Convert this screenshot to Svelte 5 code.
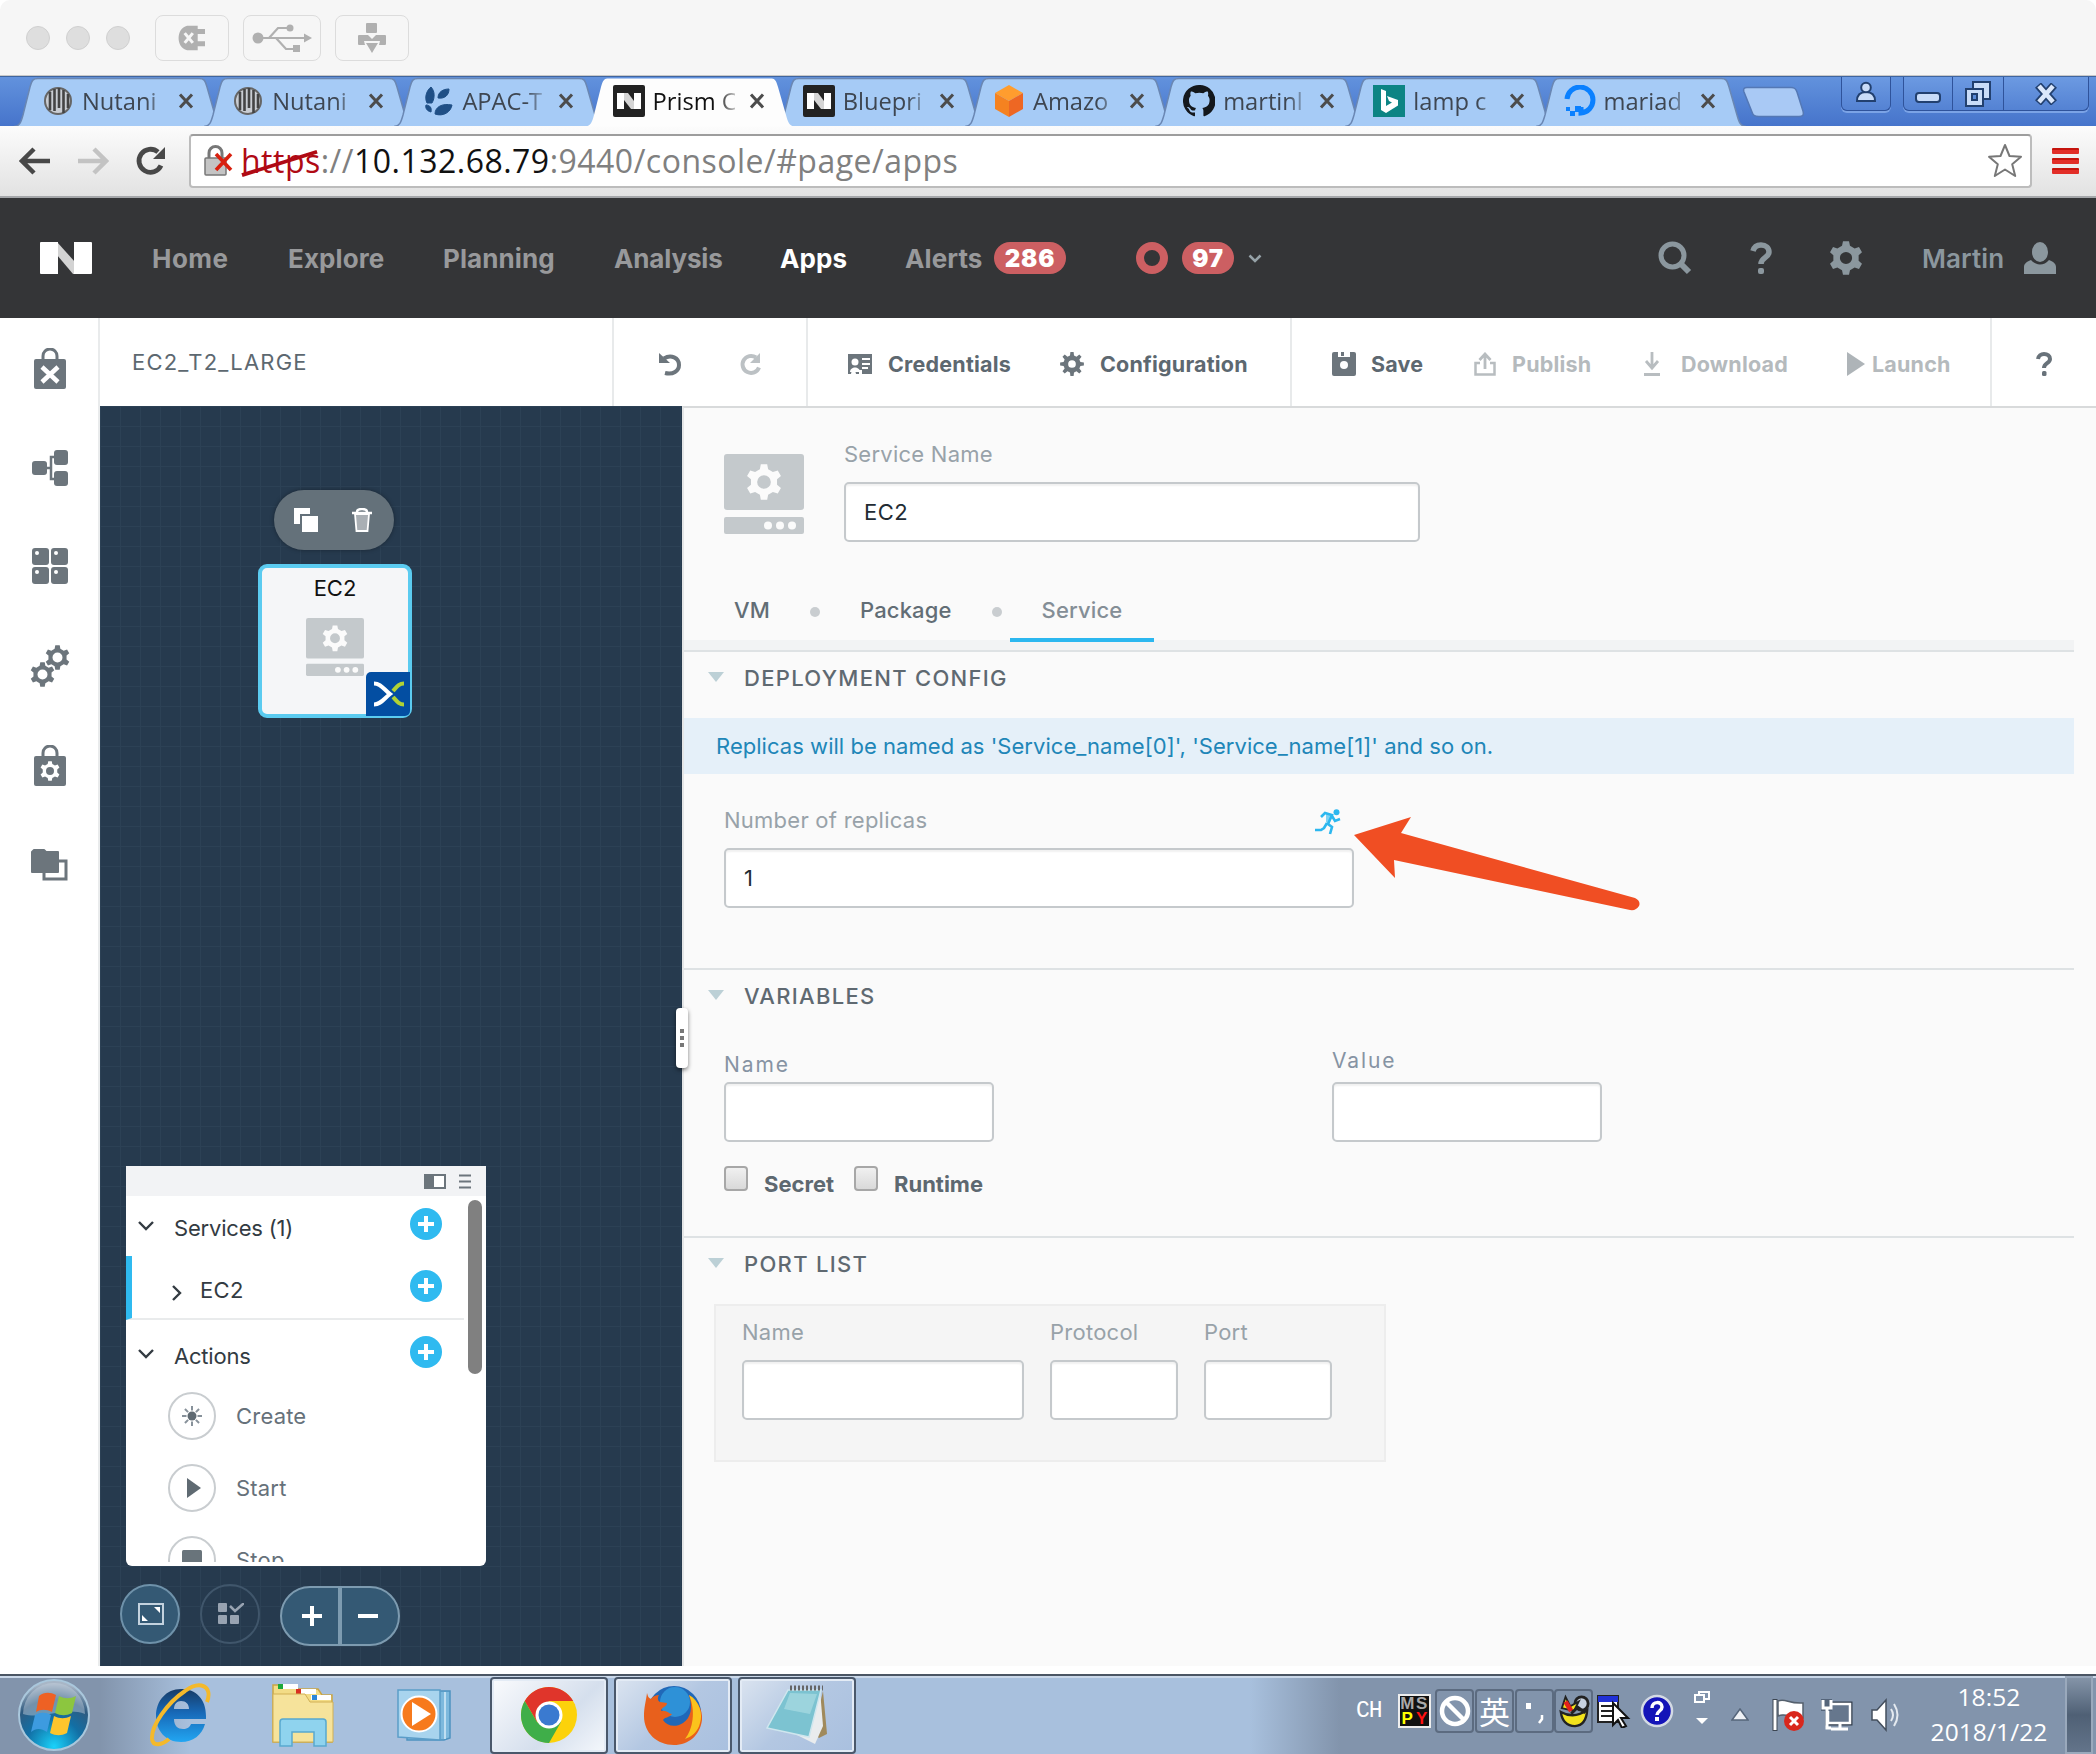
<script>
  // Outline of a cog wheel with a round hole, for use with fill-rule evenodd.
  function gear(cx, cy, r, teeth = 6, hole = 0.36, root = 0.74) {
    const pts = [];
    const step = (Math.PI * 2) / teeth;
    for (let i = 0; i < teeth; i++) {
      const a = i * step - Math.PI / 2;
      for (const [o, k] of [[-0.3, root], [-0.17, 1], [0.17, 1], [0.3, root]]) {
        const t = a + o * step;
        pts.push(`${(cx + Math.cos(t) * r * k).toFixed(2)} ${(cy + Math.sin(t) * r * k).toFixed(2)}`);
      }
    }
    const h = r * hole;
    return `M${pts.join('L')}Z M${cx - h} ${cy}a${h} ${h} 0 1 0 ${h * 2} 0a${h} ${h} 0 1 0 ${-h * 2} 0Z`;
  }

  const tabs = [
    { icon: 'globe', title: 'Nutani' },
    { icon: 'globe', title: 'Nutani' },
    { icon: 'leaf', title: 'APAC-T' },
    { icon: 'n', title: 'Prism C', active: true },
    { icon: 'n', title: 'Bluepri' },
    { icon: 'cube', title: 'Amazo' },
    { icon: 'github', title: 'martinl' },
    { icon: 'bing', title: 'lamp c' },
    { icon: 'ocean', title: 'mariad' }
  ];

  const rays = [0, 45, 90, 135, 180, 225, 270, 315];
</script>

{#snippet favicon(name)}
  <svg class="fav" viewBox="0 0 32 32">
    {#if name === 'globe'}
      <circle cx="16" cy="16" r="13" fill="#c9cdd3" stroke="#666" stroke-width="2" />
      <path d="M8 7v18M12.500 4v22M17 3v20M21.500 5v23M26 9v14" stroke="#444" stroke-width="2.600" fill="none" />
    {:else if name === 'leaf'}
      <path d="M5 18C2 12 5 5 9 2c4 4 4 11 1 16zM16 13c0-6 5-9 11-9 0 6-4 10-11 9zM13 29c0-7 7-11 17-9-1 7-9 12-17 9zM9 27c-4-1-6-4-5-7 4 0 6 3 5 7z" fill="#1f4f86" stroke="#1f4f86" />
    {:else if name === 'n'}
      <rect width="32" height="32" rx="2" fill="#222" />
      <path d="M4 8h7v16H4zM21 8h7v16h-7z" fill="#fff" />
      <path d="M11 8h4l6 8v8h-3l-7-9z" fill="#d5d5d5" />
    {:else if name === 'cube'}
      <path d="M16 0l14 8-14 8L2 8z" fill="#ff9d2e" />
      <path d="M2 8l14 8v16L2 24z" fill="#f58220" />
      <path d="M30 8l-14 8v16l14-8z" fill="#ee6723" />
    {:else if name === 'github'}
      <path d="M16 0a16 16 0 0 0-5 31.200c.8.200 1-.3 1-.8v-3c-4.500 1-5.400-1.900-5.400-1.900-.7-1.900-1.800-2.400-1.800-2.400-1.500-1 .1-1 .1-1 1.600.1 2.500 1.700 2.500 1.700 1.400 2.500 3.800 1.800 4.700 1.400.1-1 .6-1.800 1-2.200C9.500 22.600 6 21.200 6 15.100c0-1.800.6-3.200 1.700-4.300-.2-.4-.7-2.100.2-4.300 0 0 1.400-.4 4.400 1.700a15 15 0 0 1 8 0c3-2.100 4.400-1.700 4.400-1.700.9 2.200.4 3.900.2 4.300 1.100 1.100 1.700 2.500 1.700 4.300 0 6.100-3.700 7.500-7.300 7.900.6.500 1.100 1.500 1.100 3v4.400c0 .5.300 1 1.100.8A16 16 0 0 0 16 0z" fill="#14181d" />
    {:else if name === 'bing'}
      <rect width="32" height="32" fill="#0c8484" />
      <path d="M8 4l5 2v15l6-3.500-3-1.500-2-5 11 4v5.500L13 28l-5-3z" fill="#fff" />
    {:else}
      <path d="M3 14A13 13 0 1 1 17 28v-6" fill="none" stroke="#0a80ff" stroke-width="5" />
      <path d="M11 21h6v6h-6zM6 26h5v5H6zM2 22h4v4H2z" fill="#0a80ff" />
    {/if}
  </svg>
{/snippet}

{#snippet server(cls)}
  <svg class={cls} viewBox="0 0 80 80" preserveAspectRatio="none">
    <rect width="80" height="56" rx="3" fill="#c4c9cc" />
    <path d={gear(40, 28, 18, 6, 0.38)} fill="#fbfbfb" fill-rule="evenodd" />
    <rect y="63" width="80" height="17" rx="2" fill="#c4c9cc" />
    <circle cx="44" cy="71.500" r="4" fill="#fbfbfb" />
    <circle cx="56" cy="71.500" r="4" fill="#fbfbfb" />
    <circle cx="68" cy="71.500" r="4" fill="#fbfbfb" />
  </svg>
{/snippet}

{#snippet plus()}
  <svg class="plus" viewBox="0 0 32 32">
    <circle cx="16" cy="16" r="16" fill="#2fbaf0" />
    <path d="M16 8v16M8 16h16" stroke="#fff" stroke-width="4" />
  </svg>
{/snippet}

<div class="window">
  <div class="titlebar">
    <i class="light"></i><i class="light"></i><i class="light"></i>
    <div class="vmbtn b1">
      <svg width="34" height="32" viewBox="0 0 34 32">
        <path d="M11 1h13v30H11C-3 28-3 4 11 1zM22 5h11v6H22zM22 20h11v6H22z" fill="#b0b0b0" />
        <path d="M8 10l10 12M18 10L8 22" stroke="#f6f6f6" stroke-width="3.800" />
      </svg>
    </div>
    <div class="vmbtn b2">
      <svg width="60" height="30" viewBox="0 0 60 30">
        <circle cx="6" cy="15" r="5.500" fill="#b0b0b0" />
        <path d="M6 15h48M17 15l9-10h10M24 15l10 11h8" stroke="#b0b0b0" stroke-width="2.200" fill="none" />
        <path d="M52 10.500l8 4.500-8 4.500zM41 22h7v7h-7z" fill="#b0b0b0" />
        <circle cx="38" cy="5" r="3.500" fill="#b0b0b0" />
      </svg>
    </div>
    <div class="vmbtn b3">
      <svg width="30" height="30" viewBox="0 0 30 30">
        <path d="M10 0h9a1 1 0 0 1 1 1v8a1 1 0 0 1-1 1h-9a1 1 0 0 1-1-1V1a1 1 0 0 1 1-1zM2 12h9l4 4 4-4h9a1 1 0 0 1 1 1v8a1 1 0 0 1-1 1h-6l1-4H7l1 4H2a1 1 0 0 1-1-1v-8a1 1 0 0 1 1-1zM9 20h12l-6 10z" fill="#b0b0b0" />
      </svg>
    </div>
  </div>

  <div class="tabstrip">
    <div class="tabs">
      {#each tabs as t}
        <div class="tab" class:active={t.active}>
          <svg class="tabshape" viewBox="0 0 212 50" width="212" height="50">
            <path d="M1 49.500C7 49 8 45 10 38L17 10C19 3 20 1.500 25 1.500H186C191 1.500 192 3 194 10L202 38C204 45 205 49 211 49.500" fill={t.active ? '#fdfdfd' : '#a6cbf6'} stroke={t.active ? 'none' : '#6a87b3'} stroke-width="1.500" />
          </svg>
          <div class="tabbody">
            {@render favicon(t.icon)}
            <span class="tabtitle">{t.title}</span>
            <svg class="close" viewBox="0 0 16 16"><path d="M2 1.500l12 13M14 1.500L2 14.500" stroke="#4c4c4c" stroke-width="3" /></svg>
          </div>
        </div>
      {/each}
    </div>
    <svg class="newtab" width="64" height="32" viewBox="0 0 64 32"><path d="M5 1.500H49C53 1.500 54 3 55 6L61 25C62 29 61 30.500 57 30.500H17C12 30.500 11 29 10 26L2 6C1 3 2 1.500 5 1.500Z" fill="#a9c9f5" stroke="#5478b5" stroke-width="1.500" /></svg>
    <div class="wc user"><svg width="22" height="22" viewBox="0 0 22 22"><path d="M2 20c0-6 3-9 9-9s9 3 9 9z" fill="#c9dcf8" stroke="#22406f" stroke-width="2" /><circle cx="11" cy="6.500" r="4.800" fill="#c9dcf8" stroke="#22406f" stroke-width="2" /></svg></div>
    <div class="wc min"><svg width="26" height="11" viewBox="0 0 26 11"><rect x="1" y="1" width="24" height="9" rx="3" fill="#c9dcf8" stroke="#22406f" stroke-width="2" /></svg></div>
    <div class="wc mid"><svg width="26" height="26" viewBox="0 0 26 26"><path d="M8 1h17v17H8z" fill="#c9dcf8" stroke="#22406f" stroke-width="2" /><path d="M1 8h17v17H1z" fill="#c9dcf8" stroke="#22406f" stroke-width="2" /><path d="M7 13h5v6H7z" fill="#5b8bd9" stroke="#22406f" stroke-width="2" /></svg></div>
    <div class="wc x"><svg width="24" height="22" viewBox="0 0 24 22"><path d="M4 2l16 18M20 2L4 20" stroke="#22406f" stroke-width="8" /><path d="M5 3l14 16M19 3L5 19" stroke="#dbe7fb" stroke-width="4.500" /></svg></div>
  </div>

  <div class="toolbar">
    <svg width="32" height="28" viewBox="0 0 32 28"><path d="M31 14H4M15 2L3 14l12 12" stroke="#484848" stroke-width="4.500" fill="none" /></svg>
    <svg width="32" height="28" viewBox="0 0 32 28"><path d="M1 14h27M17 2l12 12-12 12" stroke="#c3c3c3" stroke-width="4.500" fill="none" /></svg>
    <svg width="32" height="30" viewBox="0 0 32 30"><path d="M26 19.500A11.500 11.500 0 1 1 23 6" stroke="#484848" stroke-width="4.800" fill="none" /><path d="M30 1v12H18z" fill="#484848" /></svg>
    <div class="omnibox">
      <svg class="lock" width="30" height="32" viewBox="0 0 30 32">
        <path d="M5 14V8a6.500 6.500 0 0 1 13 0v6" fill="none" stroke="#777" stroke-width="3" />
        <rect x="1" y="13" width="21" height="17" rx="1" fill="#c4c4c4" stroke="#777" stroke-width="1.500" />
        <path d="M12 9l15 16M27 9L12 25" stroke="#d8200f" stroke-width="3.600" />
      </svg>
      <span class="url"><span class="https">https<svg class="strike" viewBox="0 0 80 30" preserveAspectRatio="none"><path d="M1 28L78 3" stroke="#b00a14" stroke-width="4" /></svg></span><span class="dim">://</span>10.132.68.79<span class="dim">:9440/console/#page/apps</span></span>
      <svg class="star" width="36" height="36" viewBox="0 0 36 36"><path d="M18 2l4.500 11 11.500.8-8.800 7.500 3 11.700L18 26.500 7.800 33l3-11.700L2 13.800 13.500 13z" fill="#fff" stroke="#777" stroke-width="2" stroke-linejoin="round" /></svg>
    </div>
    <div class="burger"><i></i><i></i><i></i></div>
  </div>

  <div class="nav">
    <svg width="52" height="32" viewBox="0 0 52 32"><path d="M17 0l18 20v12h-2L17 13z" fill="#d3d3d3" /><path d="M1 0h17v32H1a1 1 0 0 1-1-1V1a1 1 0 0 1 1-1zM34 0h17a1 1 0 0 1 1 1v30a1 1 0 0 1-1 1H34z" fill="#fff" /></svg>
    <span class="wide">Home</span><span>Explore</span><span>Planning</span><span class="tight">Analysis</span><span class="on">Apps</span><span>Alerts</span>
    <b class="badge w72">286</b>
    <i class="ring"></i>
    <b class="badge w52">97</b>
    <svg width="14" height="9" viewBox="0 0 14 9"><path d="M1.500 1.500L7 7l5.500-5.500" stroke="#96a2a8" stroke-width="2.500" fill="none" /></svg>
    <svg width="34" height="34" viewBox="0 0 34 34"><circle cx="14.500" cy="14.500" r="11.500" stroke="#8b979e" stroke-width="5" fill="none" /><path d="M22 22l9 9" stroke="#8b979e" stroke-width="6" /></svg>
    <svg width="22" height="32" viewBox="0 0 22 32"><path d="M3 9c1-4 4-6 8-6 5 0 8 3 8 7 0 6-8 5-8 12" stroke="#8b979e" stroke-width="5.500" fill="none" /><rect x="8" y="26" width="6" height="6" rx="2" fill="#8b979e" /></svg>
    <svg width="34" height="34" viewBox="0 0 34 34"><path d={gear(17, 17, 17, 6, 0.36, 0.76)} fill="#8b979e" fill-rule="evenodd" /></svg>
    <span class="user-name">Martin</span>
    <svg width="32" height="32" viewBox="0 0 32 32"><ellipse cx="16" cy="10" rx="8" ry="10" fill="#8b979e" /><path d="M0 32v-7c0-3 2-5 7-7 5 6 13 6 18 0 5 2 7 4 7 7v7z" fill="#8b979e" /></svg>
  </div>

  <div class="main">
    <div class="rail">
      <svg width="34" height="42" viewBox="0 0 34 42"><path d="M10 12V8a7 7 0 0 1 14 0v4" stroke="#6c757c" stroke-width="3" fill="none" /><rect x="1" y="11" width="32" height="30" rx="2" fill="#6c757c" /><path d="M9 19l16 15M25 19L9 34" stroke="#fff" stroke-width="4.500" /></svg>
      <svg width="38" height="38" viewBox="0 0 38 38"><path d="M13 19h7M28 8h-8v22h8" stroke="#6c757c" stroke-width="2.500" fill="none" /><rect x="1" y="12" width="15" height="14" rx="3" fill="#6c757c" /><rect x="23" y="1" width="14" height="15" rx="3" fill="#6c757c" /><rect x="23" y="22" width="14" height="15" rx="3" fill="#6c757c" /></svg>
      <svg width="38" height="38" viewBox="0 0 38 38"><g fill="#6c757c"><rect x="1" y="1" width="17" height="17" rx="3" /><rect x="20" y="1" width="17" height="17" rx="3" /><rect x="1" y="20" width="17" height="17" rx="3" /><rect x="20" y="20" width="17" height="17" rx="3" /></g><g fill="#fff"><circle cx="6" cy="6" r="2" /><circle cx="25" cy="6" r="2" /><circle cx="6" cy="25" r="2" /><circle cx="25" cy="25" r="2" /></g></svg>
      <svg width="40" height="42" viewBox="0 0 40 42"><path d={gear(27.500, 12.500, 12.500, 6, 0.4)} fill="#6c757c" fill-rule="evenodd" /><path d={gear(12.500, 29.500, 12.500, 6, 0.4)} fill="#6c757c" fill-rule="evenodd" /></svg>
      <svg width="34" height="42" viewBox="0 0 34 42"><path d="M10 12V8a7 7 0 0 1 14 0v4" stroke="#6c757c" stroke-width="3" fill="none" /><rect x="1" y="11" width="32" height="30" rx="2" fill="#6c757c" /><path d={gear(17, 26, 10, 6, 0.4)} fill="#fff" fill-rule="evenodd" /></svg>
      <svg width="38" height="34" viewBox="0 0 38 34"><path d="M13 20v10h22V12H25" stroke="#6c757c" stroke-width="3" fill="none" /><path d="M3 1h10l2 2h12v20H1V3z" fill="#6c757c" stroke="#6c757c" stroke-width="2" stroke-linejoin="round" /></svg>
    </div>

    <div class="content">
      <div class="actions">
        <div class="seg name">EC2_T2_LARGE</div>
        <div class="seg history">
          <svg width="24" height="24" viewBox="0 0 24 24"><path d="M6 6.500C13 2 21 6 21 13c0 6-6 10-14 8" stroke="#6c757c" stroke-width="4" fill="none" /><path d="M1 1v10h11z" fill="#6c757c" /></svg>
          <svg width="24" height="24" viewBox="0 0 24 24"><path d="M21 15.500A8.500 8.500 0 1 1 18 5.500" stroke="#bcc1c4" stroke-width="4" fill="none" /><path d="M22 1v10H12z" fill="#bcc1c4" /></svg>
        </div>
        <div class="seg config">
          <svg width="24" height="20" viewBox="0 0 24 20"><path d="M0 0h24v20H14v-4H11v4H8c0-4-5-4-5 0H0z" fill="#6c757c" /><path d="M14 5h8M14 10h8M14 14h6" stroke="#fff" stroke-width="2.200" /><circle cx="7" cy="8" r="3.500" fill="#fff" /><path d="M2 18c0-6 10-6 10 0" fill="#fff" /></svg>
          <span>Credentials</span>
          <svg width="24" height="24" viewBox="0 0 24 24"><path d={gear(12, 12, 12, 8, 0.32, 0.72)} fill="#6c757c" fill-rule="evenodd" /></svg>
          <span>Configuration</span>
        </div>
        <div class="seg files">
          <svg width="24" height="24" viewBox="0 0 24 24"><rect width="24" height="24" rx="2" fill="#6c757c" /><path d="M6 0h12v5H6z" fill="#fff" /><path d="M9 0h3v4H9z" fill="#6c757c" /><circle cx="12" cy="13" r="4" fill="#fff" /></svg>
          <span>Save</span>
          <svg width="22" height="24" viewBox="0 0 22 24"><path d="M6 11H1.500v11.500h19V11H16" stroke="#b8bdc0" stroke-width="2.500" fill="none" /><path d="M11 17V3M5.500 8L11 2l5.500 6" stroke="#b8bdc0" stroke-width="2.800" fill="none" /></svg>
          <span class="off">Publish</span>
          <svg width="18" height="24" viewBox="0 0 18 24"><path d="M9 0v15M3 9l6 7 6-7" stroke="#b8bdc0" stroke-width="2.800" fill="none" /><path d="M1 21h16v3H1z" fill="#b8bdc0" /></svg>
          <span class="off">Download</span>
          <svg width="18" height="24" viewBox="0 0 18 24"><path d="M0 0l18 12L0 24z" fill="#aeb4b8" /></svg>
          <span class="off">Launch</span>
        </div>
        <div class="seg help"><svg width="16" height="24" viewBox="0 0 16 24"><path d="M2 7c.5-3 3-5 6-5 3.500 0 6 2 6 5 0 4.500-6 4-6 9" stroke="#68727a" stroke-width="4" fill="none" /><rect x="6" y="19" width="4.500" height="5" rx="1.500" fill="#68727a" /></svg></div>
      </div>

      <div class="work">
        <div class="canvas">
          <div class="pill">
            <svg width="24" height="24" viewBox="0 0 24 24"><path d="M0 0h16v6H6v10H0zM8 8h16v16H8z" fill="#fff" /></svg>
            <svg width="20" height="24" viewBox="0 0 20 24"><path d="M3 6l1.500 17h11L17 6z" fill="#a9afb4" stroke="#fff" stroke-width="1.800" /><path d="M0 5h20M5 4c0-4 10-4 10 0" stroke="#fff" stroke-width="2.400" fill="none" /></svg>
          </div>
          <div class="node">
            <span>EC2</span>
            {@render server('nodeicon')}
            <svg class="xi" width="44" height="44" viewBox="0 0 44 44"><path d="M5 0h39v39a5 5 0 0 1-5 5H0V5a5 5 0 0 1 5-5z" fill="#034ea2" /><path d="M38 11.500c-5 0-7 3-11 7.500M38 32.500c-5 0-7-3-11-7.500" fill="none" stroke="#b0d235" stroke-width="4" /><path d="M8 11.500c7 0 9 5 16 10.500-7 5.500-9 10.500-16 10.500" fill="none" stroke="#fff" stroke-width="4" /></svg>
          </div>

          <div class="tree">
            <div class="treehead">
              <svg width="22" height="15" viewBox="0 0 22 15"><rect x="1" y="1" width="20" height="13" fill="#fff" stroke="#6c757c" stroke-width="2" /><rect width="10" height="15" fill="#6c757c" /></svg>
              <svg width="14" height="15" viewBox="0 0 14 15"><path d="M1 1.500h12M1 7.500h12M1 13.500h12" stroke="#6c757c" stroke-width="2" /></svg>
            </div>
            <div class="treebody">
              <div class="rows">
                <div class="row head r1"><svg width="16" height="10" viewBox="0 0 16 10"><path d="M1 1l7 7 7-7" stroke="#333b42" stroke-width="2.400" fill="none" /></svg><span>Services (1)</span>{@render plus()}</div>
                <div class="row sel"><svg width="10" height="16" viewBox="0 0 10 16"><path d="M1 1l7 7-7 7" stroke="#333b42" stroke-width="2.400" fill="none" /></svg><span>EC2</span>{@render plus()}</div>
                <div class="row head r2"><svg width="16" height="10" viewBox="0 0 16 10"><path d="M1 1l7 7 7-7" stroke="#333b42" stroke-width="2.400" fill="none" /></svg><span>Actions</span>{@render plus()}</div>
                <div class="act"><i><svg width="20" height="20" viewBox="-10 -10 20 20"><circle r="4.500" fill="#5f6a72" />{#each rays as a}<path d="M0-5.500V-10" transform="rotate({a})" stroke="#87919a" stroke-width="2" />{/each}</svg></i><span>Create</span></div>
                <div class="act"><i><svg class="play" width="16" height="20" viewBox="0 0 16 20"><path d="M1 0l14 10L1 20z" fill="#5f6a72" /></svg></i><span>Start</span></div>
                <div class="act"><i><svg width="20" height="20" viewBox="0 0 20 20"><rect width="20" height="20" rx="1.500" fill="#69747b" /></svg></i><span>Stop</span></div>
              </div>
              <div class="thumb"></div>
            </div>
          </div>

          <div class="canvasbtns">
            <div class="round"><svg width="26" height="22" viewBox="0 0 26 22"><rect x="1" y="1" width="24" height="20" fill="none" stroke="#c3d2de" stroke-width="2" /><path d="M16 4h6v6zM4 12l6 6H4z" fill="#fff" /></svg></div>
            <div class="round dim2"><svg width="26" height="22" viewBox="0 0 26 22"><g fill="#98a3b1"><rect width="9" height="9" rx="1" /><rect y="12" width="9" height="9" rx="1" /><rect x="12" y="12" width="9" height="9" rx="1" /></g><path d="M12 3l5 5 9-8" stroke="#98a3b1" stroke-width="2.500" fill="none" /></svg></div>
            <div class="zoom"><div><svg width="20" height="20" viewBox="0 0 20 20"><path d="M10 0v20M0 10h20" stroke="#fff" stroke-width="4" /></svg></div><div><svg width="20" height="20" viewBox="0 0 20 20"><path d="M0 10h20" stroke="#fff" stroke-width="4" /></svg></div></div>
          </div>
          <div class="handle"><i></i><i></i><i></i></div>
        </div>

        <div class="pane">
          <div class="svc">
            {@render server('svcicon')}
            <div>
              <div class="label">Service Name</div>
              <div class="input i1">EC2</div>
            </div>
          </div>
          <div class="ptabs"><span>VM</span><i></i><span>Package</span><i></i><span class="cur">Service</span></div>
          <div class="band"></div>

          <section class="s1">
            <h3><i></i>DEPLOYMENT CONFIG</h3>
            <div class="banner">Replicas will be named as 'Service_name[0]', 'Service_name[1]' and so on.</div>
            <div class="replicas">
              <div class="repl"><span class="label">Number of replicas</span>
                <svg class="runner" width="28" height="26" viewBox="0 0 28 26"><circle cx="22.500" cy="3.200" r="3" fill="#2cb7ef" /><path d="M7 8l4-4 7 2-4 9 4 3-2 7M13 14l-3 5-3 2H1M18 7l3 5 5-2" stroke="#2cb7ef" stroke-width="2.600" fill="none" /><path d="M12 4l7 2-4 9-3-2z" fill="#2cb7ef" opacity=".6" /></svg>
              </div>
              <div class="input one">1</div>
            </div>
          </section>

          <section class="s2">
            <h3><i></i>VARIABLES</h3>
            <div class="vars">
              <div><div class="vlabel">Name</div><div class="input"></div></div>
              <div><div class="vlabel up">Value</div><div class="input"></div></div>
            </div>
            <div class="checks"><i></i><b>Secret</b><i></i><b>Runtime</b></div>
          </section>

          <section class="s3">
            <h3><i></i>PORT LIST</h3>
            <div class="ports">
              <div><div class="label">Name</div><div class="input"></div></div>
              <div><div class="label">Protocol</div><div class="input"></div></div>
              <div><div class="label">Port</div><div class="input"></div></div>
            </div>
          </section>
          <svg class="pointer" width="290" height="100" viewBox="0 0 290 100"><path d="M1 21L58 3 48 19 282 84Q288 87 286 92 283 97 277 96L41 46 42 64Z" fill="#f04e23" /></svg>
        </div>
      </div>
    </div>
  </div>

  <div class="taskbar">
    <svg class="orb" width="74" height="74" viewBox="0 0 74 74">
      <defs><radialGradient id="orb" cx=".5" cy=".95" r=".9"><stop offset="0" stop-color="#19d2fa" /><stop offset=".45" stop-color="#126fa5" /><stop offset=".75" stop-color="#2f5b80" /><stop offset="1" stop-color="#a8b6c6" /></radialGradient></defs>
      <circle cx="37" cy="37" r="35" fill="url(#orb)" stroke="#a9c7dc" stroke-width="2" />
      <path d="M6 36a31 31 0 0 1 62 0c-20-8-42 6-62 0z" fill="#c7d3df" opacity=".45" />
      <path d="M22 18c5-4 11-4 17-1l-4 17c-6-3-11-3-16 0z" fill="#ee6124" />
      <path d="M42 18c6 3 11 3 17 0l-4 17c-6 3-11 3-17 0z" fill="#8cc63f" />
      <path d="M18 37c5-3 11-3 16 0l-4 17c-6-4-11-4-16 0z" fill="#3d9be0" />
      <path d="M37 38c6 3 11 3 17 0l-4 17c-6 3-11 3-17 0z" fill="#fdc52d" />
    </svg>
    <svg class="ie" width="68" height="66" viewBox="0 0 68 66">
      <defs><linearGradient id="ieg" x1="0" y1="0" x2="0" y2="1"><stop offset="0" stop-color="#173b66" /><stop offset=".45" stop-color="#1769b8" /><stop offset="1" stop-color="#22a6f2" /></linearGradient></defs>
      <path d="M36 7C51 7 61 17 61 34v3H29c0 7 4 10 9 10 4 0 7-2 8-5h14c-3 11-12 18-24 18C21 60 11 49 11 34S21 7 36 7zm0 12c-4 0-7 3-7 8h15c0-5-3-8-8-8z" fill="url(#ieg)" fill-rule="evenodd" />
      <path d="M62 20C68 4 55-2 40 9 22 21 6 44 7 57c1 8 10 6 17 0" fill="none" stroke="#f4b92b" stroke-width="4" />
    </svg>
    <svg class="folder" width="66" height="66" viewBox="0 0 66 66">
      <path d="M3 3h20l5 4h20l4 6h10v47H3z" fill="#f3dc86" stroke="#c9a545" stroke-width="1.500" />
      <path d="M8 2h20v5H8zM26 7h20v5H26zM41 13h20v5H41z" fill="#fff" /><path d="M8 2h5v5H8z" fill="#1ca83a" /><path d="M26 7h5v5h-5z" fill="#d92f21" /><path d="M42 13h5v5h-5z" fill="#2b86d9" />
      <path d="M3 12h32l5 8h23v40H3z" fill="#f6e39b" stroke="#d1b055" stroke-width="1" />
      <path d="M10 64V40q0-3 3-3h40q3 0 3 3v24H44V50H22v14z" fill="#8fd3ee" stroke="#58a9d0" stroke-width="1.500" />
    </svg>
    <svg class="wmp" width="60" height="54" viewBox="0 0 60 54"><path d="M10 3h43v47l-6 2H10z" fill="#7db9dd" stroke="#4e93c0" stroke-width="1.500" /><path d="M48 4v47" stroke="#d6ecf8" stroke-width="1.500" /><path d="M1 2h42v50L1 49z" fill="#a8d4ee" stroke="#5b9dc8" stroke-width="1.500" /><circle cx="22" cy="26" r="17.500" fill="#f77a1c" stroke="#fff" stroke-width="2" /><path d="M15 14l19 12-19 12z" fill="#fff" /></svg>
    <div class="task lit">
      <svg width="58" height="58" viewBox="0 0 58 58"><circle cx="29" cy="29" r="28" fill="#fcd20b" /><path d="M4.700 15A28 28 0 0 1 53.200 15H29L17 36z" fill="#e0352b" /><path d="M4.700 15A28 28 0 0 0 29 57L41 36 29 42 17 36z" fill="#3fae49" /><circle cx="29" cy="29" r="13.500" fill="#fff" /><circle cx="29" cy="29" r="10.500" fill="#3a7ad0" /></svg>
    </div>
    <div class="task">
      <svg width="60" height="60" viewBox="0 0 60 60"><circle cx="31" cy="28" r="27" fill="#2068b8" /><circle cx="32" cy="17" r="15" fill="#35a3e4" opacity=".7" /><path d="M4 8c1 4 2 5 4 6 2-3 5-4 8-4-2 3-1 6 1 7l7 1c0 4-6 4-6 8 6-1 8 3 11 3-3 4-7 3-9 6 4 6 12 8 20 3 8-5 10-16 6-28 8 6 14 14 13 25C57 50 46 60 31 60 14 60 1 48 1 31 1 22 3 16 4 8z" fill="#e8601c" /><path d="M46 10c11 6 14 20 11 28-2 9-9 14-15 16 8-10 11-28 4-44z" fill="#fbc31c" /></svg>
    </div>
    <div class="task">
      <svg width="62" height="60" viewBox="0 0 62 60"><path d="M57 6l4 43-8 4-6-5z" fill="#a08a5c" /><path d="M54 5l3 36-8 18-18-9z" fill="#e9ecee" /><path d="M22 5h33L43 52 1 43z" fill="#7cc3d1" stroke="#cfe6ee" stroke-width="1.500" /><path d="M24 8l27 1-7 20-26-5z" fill="#a9dbe3" opacity=".7" /><path d="M24 3h33" stroke="#666" stroke-width="5" stroke-dasharray="2 2" /></svg>
    </div>

    <div class="tray">
      <span class="ch raise">CH</span>
      <div class="mspy raise"><b>M</b><b>S</b><b class="y">P</b><b class="r">Y</b></div>
      <div class="ime raise"><svg width="32" height="34" viewBox="0 0 32 34"><circle cx="16" cy="17" r="13" stroke="#fff" stroke-width="4.500" fill="none" /><path d="M7 8l18 18" stroke="#fff" stroke-width="4.500" /></svg></div>
      <div class="ime cjk raise">英</div>
      <div class="ime raise"><svg width="28" height="32" viewBox="0 0 28 32"><rect x="5" y="8" width="5" height="6" fill="#fff" /><path d="M21 20v4l-3 4" stroke="#fff" stroke-width="2.500" fill="none" /></svg></div>
      <div class="ime raise"><svg width="32" height="34" viewBox="0 0 34 34"><circle cx="25" cy="9" r="7" fill="#c7d2e0" stroke="#222" stroke-width="3" /><path d="M4 14l4-12 5 10 9-5-5 10z" fill="#f2e21c" stroke="#222" stroke-width="2" /><path d="M8 7l6 10" stroke="#e3201b" stroke-width="5" /><path d="M3 18q14 8 28-2-1 16-13 17Q5 33 3 18z" fill="#f2e21c" stroke="#222" stroke-width="2.500" /><path d="M14 20l7-7 8 6" fill="none" stroke="#222" stroke-width="3" /></svg></div>
      <svg class="raise" width="34" height="34" viewBox="0 0 34 34"><path d="M1 2h20v26H1z" fill="#fff" stroke="#222" stroke-width="2" /><path d="M1 2h20v6H1z" fill="#2131d6" /><path d="M4 12h13M4 17h13M4 22h13" stroke="#222" stroke-width="2" /><path d="M16 9l15 15h-7l5 8-4 2-4-8-5 5z" fill="#fff" stroke="#111" stroke-width="2" /></svg>
      <svg class="raise" width="34" height="34" viewBox="0 0 34 34"><circle cx="17" cy="17" r="15" fill="#1414b8" stroke="#d4dae4" stroke-width="2.500" /><path d="M12 14c0-7 10-7 10-1 0 4-5 4-5 8" stroke="#fff" stroke-width="3.500" fill="none" /><rect x="15" y="23" width="4" height="4" fill="#fff" /></svg>
      <svg class="raise2" width="18" height="36" viewBox="0 0 18 36"><path d="M6 5V2h10v7h-4M2 5h9v7H2z" fill="none" stroke="#fff" stroke-width="2" /><path d="M3 28h12l-6 6z" fill="#fff" /></svg>
      <svg width="18" height="14" viewBox="0 0 18 14"><path d="M9 1l8 11H1z" fill="#eef1f5" stroke="#55657a" stroke-width="1.500" /></svg>
      <svg width="36" height="34" viewBox="0 0 36 34"><path d="M3 1v32" stroke="#3d4652" stroke-width="5" /><path d="M3 2v30" stroke="#fff" stroke-width="3" /><path d="M6 3c8-3 10 3 25 2v15C20 21 14 14 6 18z" fill="#fff" stroke="#55606d" stroke-width="1.500" /><circle cx="22" cy="23" r="10" fill="#d9281d" /><path d="M18 19l8 8M26 19l-8 8" stroke="#fff" stroke-width="3" /></svg>
      <svg width="34" height="34" viewBox="0 0 34 34"><rect x="8" y="6" width="22" height="19" fill="#66778d" stroke="#333e4c" stroke-width="5" /><rect x="8" y="6" width="22" height="19" fill="#66778d" stroke="#fff" stroke-width="2.500" /><path d="M11 31h17M20 26v5" stroke="#fff" stroke-width="3" /><path d="M1 1h11v12H1z" fill="#55657a" /><path d="M3 2v8h8V2M7 10v20h4" stroke="#fff" stroke-width="3" fill="none" /></svg>
      <svg width="28" height="34" viewBox="0 0 28 34"><path d="M1 12h5l9-10v30L6 22H1z" fill="#fff" stroke="#444f5d" stroke-width="1.500" /><path d="M20 11q4 6 0 12M23 6q7 11 0 22" stroke="#e5eaf0" stroke-width="2" fill="none" /></svg>
      <div class="clock"><span>18:52</span><span>2018/1/22</span></div>
      <div class="desk"></div>
    </div>
  </div>
</div>

<style>
  :global(body) { margin: 0; background: #fff; }
  .window { width: 2096px; height: 1754px; overflow: hidden; background: #fff; font-family: Inter, "Open Sans", sans-serif; display: flex; flex-direction: column; color: #333b42; }
  .window :global(svg) { display: block; flex: none; }
  .window :global(*) { box-sizing: border-box; }

  .titlebar { height: 76px; flex: none; background: #f6f6f6; border-bottom: 1px solid #c9c9c9; display: flex; align-items: center; padding-left: 26px; border-radius: 10px 10px 0 0; }
  .light { width: 24px; height: 24px; border-radius: 50%; background: #dedede; border: 1px solid #d0d0d0; margin-right: 16px; }
  .vmbtn { height: 46px; border: 1.5px solid #dcdcdc; border-radius: 8px; display: flex; align-items: center; justify-content: center; }
  .b1 { width: 74px; margin-left: 9px; }
  .b1 svg { height: 26px; }
  .b2 { width: 78px; margin-left: 14px; }
  .b3 { width: 74px; margin-left: 14px; }

  .tabstrip { height: 50px; flex: none; background: linear-gradient(#6292dd, #4674cb); border-top: 1px solid #3f659f; display: flex; align-items: flex-start; }
  .tabs { display: flex; padding-left: 13px; width: 1742px; flex: none; }
  .tab { width: 190.2px; height: 50px; display: grid; flex: none; }
  .tab > * { grid-area: 1 / 1; }
  .tab.active { position: relative; z-index: 2; }
  .tabbody { display: flex; align-items: center; padding-left: 29px; height: 48px; z-index: 1; }
  .fav { width: 32px; height: 32px; }
  .tabtitle { font: 23.7px/36px "Open Sans", sans-serif; color: #3e4651; margin-left: 8px; width: 82px; white-space: nowrap; -webkit-mask-image: linear-gradient(90deg, #000 64px, rgba(0, 0, 0, 0.25) 82px); mask-image: linear-gradient(90deg, #000 64px, rgba(0, 0, 0, 0.25) 82px); }
  .active .tabtitle { color: #111; }
  .close { width: 16px; height: 16px; margin-left: 14px; }
  .newtab { margin-top: 9px; }
  .wc { height: 34px; border: 1.5px solid #2f539b; border-top: 0; display: flex; align-items: center; justify-content: center; background: linear-gradient(#6c9ae2, #5482d3); flex: none; box-shadow: 0 2px 0 #7ba3e6; }
  .user { width: 50px; margin-left: 35px; border-radius: 0 0 6px 6px; padding-bottom: 4px; }
  .min { width: 50px; margin-left: 12px; border-radius: 0 0 0 6px; padding-top: 8px; }
  .mid { width: 51px; border-left: 0; }
  .x { width: 85px; border-left: 0; border-radius: 0 0 6px 0; }

  .toolbar { height: 72px; flex: none; background: linear-gradient(#fcfcfc, #e2e2e2); border-bottom: 2px solid #a5a7aa; display: flex; align-items: center; padding-left: 19px; }
  .toolbar > svg { margin-right: 26px; }
  .omnibox { width: 1843px; height: 54px; margin-left: -4px; background: #fff; border: 2px solid #bcbcbc; border-top-color: #9d9d9d; border-radius: 4px; display: flex; align-items: center; padding-left: 13px; }
  .url { margin-left: 7px; font: 32px/44px "Open Sans", sans-serif; letter-spacing: 0.48px; color: #111; flex: 1; white-space: nowrap; }
  .https { color: #b00a14; position: relative; }
  .strike { position: absolute; left: 0; top: 10px; width: 78px; height: 28px; }
  .dim { color: #808080; }
  .star { margin-right: 7px; }
  .burger { margin-left: 20px; display: flex; flex-direction: column; gap: 4px; }
  .burger i { width: 27px; height: 6px; background: #e22e28; border-top: 2px solid #c5140d; border-radius: 1px; }

  .nav { height: 120px; flex: none; background: #343537; display: grid; align-items: center; padding: 0 0 0 40px; grid-template-columns: 112px 136px 155px 171px 166px 125px 89px 142px 46px 66px 410px 92px 79px 93px 102px 32px; font-weight: 700; font-size: 26px; color: #98999b; letter-spacing: 0.1px; }
  .wide { letter-spacing: 0.5px; }
  .tight { letter-spacing: -0.15px; }
  .on { color: #fff; }
  .badge { background: #cc5f62; color: #fff; height: 32px; border-radius: 16px; display: flex; align-items: center; justify-content: center; font-size: 24px; letter-spacing: 0.8px; }
  .w72 { width: 72px; }
  .w52 { width: 52px; }
  .ring { width: 32px; height: 32px; border: 8px solid #cc5f62; border-radius: 50%; }
  .user-name { color: #8b979e; font-weight: 600; }

  .main { display: flex; height: 1348px; flex: none; }
  .rail { width: 100px; padding-left: 2px; border-right: 2px solid #e9ebec; display: grid; grid-template-rows: 101px 97px repeat(4, 100px); justify-items: center; align-items: center; align-content: start; }
  .content { flex: 1; display: flex; flex-direction: column; }
  .actions { height: 88px; flex: none; display: flex; font-size: 21.5px; color: #5d6870; letter-spacing: 0.2px; }
  .seg { height: 88px; display: flex; align-items: center; border-right: 2px solid #e8eaeb; padding-top: 3px; }
  .name { width: 514px; padding: 0 0 0 32px; letter-spacing: 1.2px; font-size: 22px; color: #5d6870; }
  .history { width: 194px; padding-left: 44px; gap: 56px; }
  .config { width: 484px; display: grid; padding-left: 40px; grid-template-columns: 40px 172px 40px 190px; font-weight: 700; }
  .files { width: 700px; display: grid; padding-left: 40px; grid-template-columns: 39px 103px 38px 131px 38px 166px 25px 100px; font-weight: 700; }
  .off { color: #b5babd; }
  .help { flex: 1; border: 0; padding-left: 44px; }

  .work { display: flex; height: 1260px; }
  .canvas { width: 582px; background-color: #263a4e; background-image: linear-gradient(90deg, transparent 19px, #2c4155 19px), linear-gradient(transparent 19px, #2c4155 19px); background-size: 20px 20px; background-position: 1px 1px; position: relative; flex: none; }
  .pill { position: absolute; left: 174px; top: 84px; width: 120px; height: 60px; border-radius: 30px; background: #64717a; display: flex; align-items: center; padding-left: 20px; gap: 34px; box-shadow: 0 0 4px rgba(0, 0, 0, 0.35); }
  .node { position: absolute; left: 158px; top: 158px; width: 154px; height: 154px; border: 4px solid #5bcbf0; border-radius: 9px; background: #f5f6f8; display: flex; flex-direction: column; align-items: center; padding-top: 6px; font-size: 22px; line-height: 28px; color: #111; }
  .window :global(.nodeicon) { width: 58px; height: 58px; margin-top: 16px; }
  .xi { position: absolute; right: -2px; bottom: -2px; }

  .tree { position: absolute; left: 26px; top: 760px; width: 360px; height: 400px; background: #fff; border-radius: 0 0 6px 6px; overflow: hidden; }
  .treehead { height: 30px; background: #f2f3f5; display: flex; justify-content: flex-end; align-items: center; gap: 12px; padding-right: 14px; }
  .treebody { display: flex; height: 366px; overflow: hidden; }
  .rows { width: 338px; flex: none; }
  .row { display: grid; align-items: center; font-size: 22px; color: #333b42; }
  .head { grid-template-columns: 36px 236px 32px; padding-left: 12px; height: 60px; }
  .head span { padding-top: 8px; letter-spacing: -0.2px; }
  .head > svg:first-child { margin-top: 3px; }
  .r1 { padding-bottom: 4px; }
  .r2 { padding-top: 4px; }
  .sel { grid-template-columns: 28px 210px 32px; padding-left: 40px; height: 64px; border-left: 6px solid #2fbaf0; border-bottom: 2px solid #e9ebec; }
  .sel span { padding-top: 6px; letter-spacing: 0.4px; }
  .sel > svg:first-child { margin-top: 12px; }
  .sel :global(.plus) { margin-top: -2px; }
  .plus { width: 32px; height: 32px; }
  .act { height: 72px; display: flex; align-items: center; padding-left: 42px; font-size: 22px; color: #66717a; letter-spacing: 0.2px; }
  .act i { width: 48px; height: 48px; border: 2px solid #c9cdd0; border-radius: 50%; display: flex; align-items: center; justify-content: center; margin-right: 20px; flex: none; }
  .play { margin-left: 3px; }
  .thumb { width: 14px; height: 174px; margin: 4px 0 0 4px; border-radius: 7px; background: #808080; }

  .canvasbtns { position: absolute; left: 20px; top: 1178px; display: flex; gap: 20px; }
  .round { width: 60px; height: 60px; border-radius: 50%; border: 2px solid #6f92aa; background: #345974; display: flex; align-items: center; justify-content: center; padding-left: 2px; }
  .dim2 { background: transparent; border-color: #40566b; }
  .zoom { margin-top: 2px; width: 120px; height: 60px; border-radius: 30px; border: 2px solid #7d9bb0; background: #345974; display: flex; overflow: hidden; }
  .zoom div { width: 56px; padding-left: 4px; display: flex; align-items: center; justify-content: center; }
  .zoom div + div { width: 60px; border-left: 4px solid #7d9bb0; padding: 0 4px 0 0; }
  .handle { position: absolute; left: 576px; top: 602px; width: 12px; height: 60px; background: #fff; border-radius: 4px; box-shadow: 0 2px 4px rgba(0, 0, 0, 0.5); display: flex; flex-direction: column; gap: 3px; align-items: center; justify-content: center; z-index: 3; }
  .handle i { width: 4px; height: 4px; background: #777; }

  .pane { flex: 1; background: #fafafa; border-top: 2px solid #d8dadb; border-left: 2px solid #e4e6e7; position: relative; }
  .svc { display: flex; gap: 40px; padding: 31px 0 0 40px; }
  .window :global(.svcicon) { width: 80px; height: 80px; margin-top: 15px; }
  .label { font-size: 22px; line-height: 30px; color: #98a2a9; letter-spacing: 0.25px; }
  .input { height: 60px; border: 2px solid #c5c9cc; border-radius: 5px; background: #fff; box-shadow: inset 0 2px 2px #f1f1f1; font-size: 22px; letter-spacing: 0.5px; line-height: 56px; padding-left: 18px; color: #222b33; }
  .i1 { width: 576px; margin-top: 13px; }
  .ptabs { margin-top: 36px; height: 64px; display: grid; grid-template-columns: 76px 50px 132px 18px 144px; padding-left: 50px; align-items: center; font-size: 22px; color: #626d75; font-weight: 500; letter-spacing: 0.15px; position: relative; z-index: 1; }
  .ptabs i { width: 10px; height: 10px; border-radius: 50%; background: #c9cdd0; margin-top: 4px; }
  .cur { height: 64px; line-height: 64px; text-align: center; border-bottom: 4px solid #2cb7ef; color: #848e96; }
  .band { width: 1390px; height: 10px; margin-top: -2px; background: #f2f3f4; }
  section { border-top: 2px solid #dee2e4; width: 1390px; }
  h3 { margin: 0; height: 52px; display: flex; align-items: center; font-size: 22px; font-weight: 500; color: #5f6971; padding-left: 24px; letter-spacing: 1.3px; }
  h3 i { border: 8px solid transparent; border-top: 10px solid #bcd0d6; border-bottom: 0; margin-right: 20px; margin-top: -2px; }
  .s1 { height: 318px; }
  .banner { margin-top: 14px; height: 56px; background: #e5f0f9; color: #2086b8; font-size: 22px; letter-spacing: 0.04px; line-height: 56px; padding-left: 32px; white-space: nowrap; }
  .replicas { padding: 31px 0 0 40px; width: 670px; }
  .repl { display: flex; justify-content: space-between; align-items: center; padding-right: 12px; height: 30px; }
  .runner { margin-top: 4px; }
  .one { margin-top: 13px; }
  .s2 { height: 268px; }
  .vars { display: grid; grid-template-columns: 608px 270px; padding: 28px 0 0 40px; }
  .vars .input { width: 270px; margin-top: 2px; }
  .vlabel { font-size: 21px; line-height: 30px; letter-spacing: 1.9px; color: #8693a3; }
  .up { position: relative; top: -4px; }
  .checks { display: flex; padding: 24px 0 0 40px; font-size: 22px; line-height: 36px; color: #5d6870; }
  .checks i { width: 24px; height: 25px; border: 2px solid #a7a7a7; border-radius: 4px; background: linear-gradient(#f0f0f0, #d9d9d9); margin-right: 16px; }
  .checks b { width: 90px; }
  .ports { margin: 14px 0 0 30px; width: 672px; height: 158px; border: 2px solid #ededed; background: #f5f5f5; display: grid; grid-template-columns: 282px 128px 128px; column-gap: 26px; padding: 11px 0 0 26px; }
  .ports .input { margin-top: 13px; }
  .pointer { position: absolute; left: 669px; top: 406px; }

  .taskbar { margin-top: 8px; height: 80px; flex: none; border-top: 2px solid #4b5664; box-shadow: inset 0 2px 0 #cbd9ea; background: linear-gradient(90deg, #8294ac 0, #8294ac 100px, #a8c0dd 190px, #a8c0dd 1250px, #8294ac 1340px); display: flex; align-items: center; }
  .orb { margin-left: 17px; }
  .ie { margin-left: 54px; }
  .folder { margin-left: 57px; }
  .wmp { margin-left: 61px; }
  .task { width: 118px; height: 77px; margin-right: 6px; border: 2px solid #4a586b; border-radius: 4px; background: linear-gradient(135deg, #dbe4f0, #b3c7e2 50%, #a9c0df); box-shadow: inset 0 0 0 2px #e3ebf5; display: flex; align-items: center; justify-content: center; flex: none; }
  .lit { margin-left: 33px; background: linear-gradient(135deg, #fafbfd, #d5dfed 60%, #f5f8fc); }
  .tray { margin-left: auto; width: 740px; height: 78px; display: grid; align-items: center; justify-items: start; grid-template-columns: 42px 37px 40px 40px 39px 43px 43px 53px 38px 41px 48px 51px 40px 154px 30px; }
  .raise { margin-bottom: 8px; }
  .raise2 { margin-bottom: 14px; }
  .ch { color: #fff; font: 23px "Liberation Mono", monospace; letter-spacing: -1px; }
  .mspy { width: 33px; height: 34px; background: #111; border: 2px solid #eee; display: grid; grid-template-columns: 1fr 1fr; font: 700 17px/15px "Liberation Sans", sans-serif; color: #aaa; text-align: center; }
  .y { color: #ff0; }
  .r { color: #f11; }
  .ime { width: 39px; height: 44px; border: 2px solid #5c6b80; border-radius: 4px; display: flex; align-items: center; justify-content: center; }
  .cjk { color: #fff; font: 31px/40px "Noto Sans CJK SC", sans-serif; }
  .clock { width: 140px; margin-left: 8px; display: flex; flex-direction: column; align-items: center; color: #fff; font: 24.5px/35px "Open Sans", sans-serif; letter-spacing: 0.1px; padding-bottom: 2px; }
  .desk { width: 28px; height: 78px; border: 2px solid #9aa9bc; background: linear-gradient(#8494a8, #4f6075 50%, #63748a); }
</style>
